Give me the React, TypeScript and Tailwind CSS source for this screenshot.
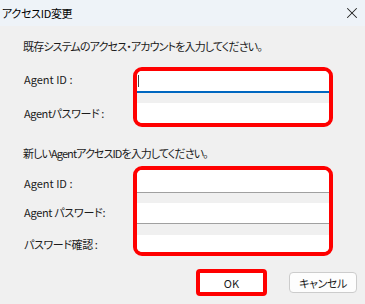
import { X } from "lucide-react";

const font = {
  fontFamily: '"Noto Sans CJK JP", "Noto Sans", sans-serif',
  fontFeatureSettings: '"palt"',
};

export default function App() {
  return (
    <div
      className="w-[365px] h-[304px] bg-[#f0f0f0] text-[11px] leading-4 text-[#1b1b1b] overflow-hidden"
      style={font}
    >
      {/* Title bar */}
      <div className="h-[26px] bg-[#eef3f8] flex items-center justify-between pl-[2px] pr-1">
        <span className="text-[11px] tracking-[-0.3px] text-black">アクセスID変更</span>
        <X className="w-[18px] h-[18px] text-[#222]" strokeWidth={1.4} />
      </div>

      <div className="pl-[23px] pt-3">
        <p className="tracking-[-0.85px]">既存システムのアクセス・アカウントを入力してください。</p>

        {/* Existing account */}
        <div className="flex mt-[13px]">
          <div className="w-[110px] flex flex-col pt-1 pl-px">
            <span>Agent ID :</span>
            <span className="mt-[18px] tracking-[-0.4px]">Agentパスワード :</span>
          </div>
          <div className="w-[200px] h-[60px] border-4 border-[#ff0000] rounded-[9px] overflow-hidden flex flex-col bg-[#f0f0f0]">
            <div className="h-[22px] bg-white border-b-2 border-[#0067c0] flex items-center pl-[1px]">
              <span className="w-px h-[12px] bg-[#444]" />
            </div>
            <div className="h-[20px] mt-[10px] bg-white" />
          </div>
        </div>

        <p className="mt-[18px] tracking-[-0.9px]">新しいAgentアクセスIDを入力してください。</p>

        {/* New account */}
        <div className="flex mt-[5px]">
          <div className="w-[110px] flex flex-col pt-[9px] pl-px">
            <span>Agent ID :</span>
            <span className="mt-[13px] tracking-[-0.3px]">Agent パスワード:</span>
            <span className="mt-4 tracking-[-0.4px]">パスワード確認 :</span>
          </div>
          <div className="w-[200px] h-[90px] border-4 border-[#ff0000] rounded-[9px] overflow-hidden flex flex-col bg-[#f0f0f0]">
            <div className="h-[23px] bg-white border-b border-[#a0a0a0]" />
            <div className="h-[21px] mt-[10px] bg-white border-b border-[#a0a0a0]" />
            <div className="h-[17px] mt-[11px] bg-white" />
          </div>
        </div>
      </div>

      {/* Buttons */}
      <div className="flex justify-end items-center gap-[22px] pr-2 mt-[13px]">
        <div className="w-[71px] h-[27px] border-4 border-[#ff0000] rounded-[4px] bg-white flex items-center justify-center">
          OK
        </div>
        <div className="w-[68px] h-[21px] border border-[#cccccc] rounded-[4px] bg-[#fdfdfd] flex items-center justify-center tracking-[-0.4px]">
          キャンセル
        </div>
      </div>
    </div>
  );
}
